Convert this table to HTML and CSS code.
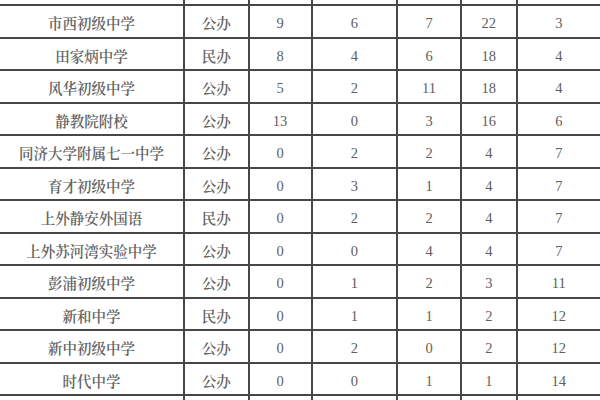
FILE: index.html
```html
<!DOCTYPE html>
<html lang="zh-CN">
<head>
<meta charset="utf-8">
<link rel="stylesheet" href="styles.css">
</head>
<body>
<div class="sheet">
<table class="grid">
<colgroup>
<col class="c-name"><col class="c-type"><col class="c-a"><col class="c-b"><col class="c-c"><col class="c-d"><col class="c-e">
</colgroup>
<tbody>
<tr class="cut"><td></td><td></td><td></td><td></td><td></td><td></td><td></td></tr>
<tr><td class="name">市西初级中学</td><td class="type">公办</td><td>9</td><td>6</td><td>7</td><td>22</td><td>3</td></tr>
<tr><td class="name">田家炳中学</td><td class="type">民办</td><td>8</td><td>4</td><td>6</td><td>18</td><td>4</td></tr>
<tr><td class="name">风华初级中学</td><td class="type">公办</td><td>5</td><td>2</td><td>11</td><td>18</td><td>4</td></tr>
<tr><td class="name">静教院附校</td><td class="type">公办</td><td>13</td><td>0</td><td>3</td><td>16</td><td>6</td></tr>
<tr><td class="name">同济大学附属七一中学</td><td class="type">公办</td><td>0</td><td>2</td><td>2</td><td>4</td><td>7</td></tr>
<tr><td class="name">育才初级中学</td><td class="type">公办</td><td>0</td><td>3</td><td>1</td><td>4</td><td>7</td></tr>
<tr><td class="name">上外静安外国语</td><td class="type">民办</td><td>0</td><td>2</td><td>2</td><td>4</td><td>7</td></tr>
<tr><td class="name">上外苏河湾实验中学</td><td class="type">公办</td><td>0</td><td>0</td><td>4</td><td>4</td><td>7</td></tr>
<tr><td class="name">彭浦初级中学</td><td class="type">公办</td><td>0</td><td>1</td><td>2</td><td>3</td><td>11</td></tr>
<tr><td class="name">新和中学</td><td class="type">民办</td><td>0</td><td>1</td><td>1</td><td>2</td><td>12</td></tr>
<tr><td class="name">新中初级中学</td><td class="type">公办</td><td>0</td><td>2</td><td>0</td><td>2</td><td>12</td></tr>
<tr><td class="name">时代中学</td><td class="type">公办</td><td>0</td><td>0</td><td>1</td><td>1</td><td>14</td></tr>
<tr class="cut"><td></td><td></td><td></td><td></td><td></td><td></td><td></td></tr>
</tbody>
</table>
</div>
</body>
</html>
```
FILE: styles.css
```css
html, body {
  margin: 0;
  padding: 0;
  background: #ffffff;
}
.sheet {
  width: 600px;
  height: 400px;
  overflow: hidden;
}
.grid {
  border-collapse: collapse;
  table-layout: fixed;
  width: 602px;
  margin-left: -2px;
  margin-top: -28.5px;
  font-family: "Liberation Serif", "Noto Serif CJK SC", "Noto Sans CJK SC", serif;
  color: #606060;
  font-size: 14.5px;
}
.c-name { width: 185px; }
.c-type { width: 64.5px; }
.c-a { width: 63px; }
.c-b { width: 85.5px; }
.c-c { width: 64px; }
.c-d { width: 55.5px; }
.c-e { width: 84.5px; }
.grid td {
  border: 2px solid #474747;
  height: 32.5px;
  padding: 4px 0 0 0;
  box-sizing: border-box;
  text-align: center;
  vertical-align: middle;
  line-height: 16px;
}
.grid td.name,
.grid td.type {
  font-family: "Noto Serif CJK SC", "Noto Sans CJK SC", serif;
  font-size: 14.5px;
  font-weight: 600;
  color: #646464;
}
.grid tr.cut td {
  height: 32.5px;
}
```
